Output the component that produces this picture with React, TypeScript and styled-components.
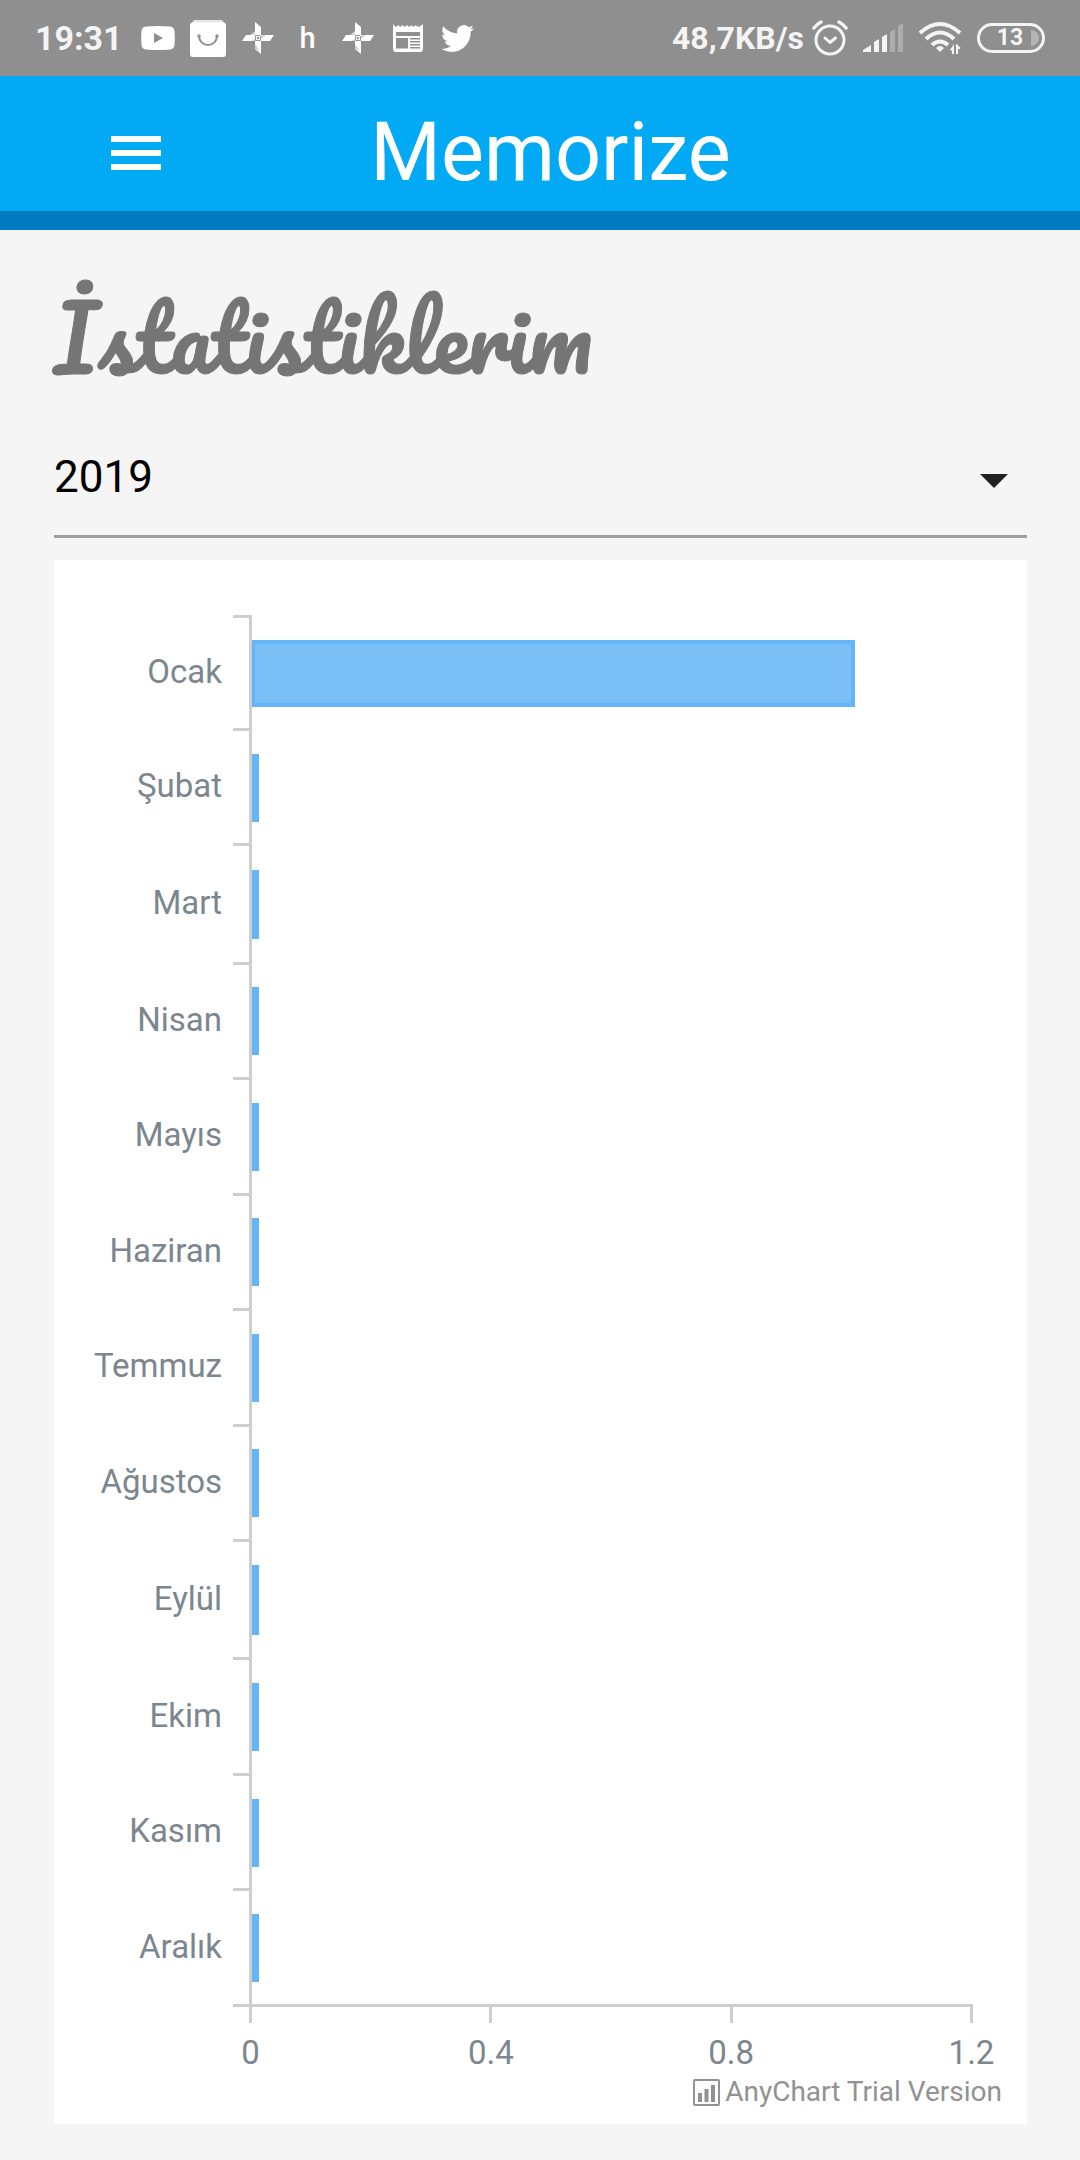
import React, { useState } from "react";
import styled, { createGlobalStyle } from "styled-components";

const GlobalStyle = createGlobalStyle`
  *, *::before, *::after { box-sizing: border-box; }
  body {
    margin: 0;
    background: #f5f5f5;
    font-family: Roboto, "Noto Sans", sans-serif;
  }
`;

const Page = styled.div`
  display: flex;
  flex-direction: column;
  min-height: 100vh;
`;

/* Status bar */

const StatusBar = styled.div`
  display: flex;
  justify-content: space-between;
  align-items: center;
  height: 76px;
  padding: 0 35px;
  background: #8f8f8f;
  color: #f4f4f4;
`;

const StatusGroup = styled.div<{ $gap: number }>`
  display: flex;
  align-items: center;
  gap: ${(p) => p.$gap}px;
`;

const StatusText = styled.span<{ $size: number; $weight: number }>`
  font-size: ${(p) => p.$size}px;
  font-weight: ${(p) => p.$weight};
  line-height: 40px;
  white-space: nowrap;
`;

const Notifications = styled.div`
  display: grid;
  grid-auto-flow: column;
  grid-auto-columns: 50px;
  place-items: center;
  color: #fff;
`;

/* App bar */

const AppBar = styled.header`
  display: grid;
  grid-template-columns: 1fr auto 1fr;
  align-items: center;
  height: 154px;
  padding: 0 90px 0 111px;
  background: #02a9f5;
  border-bottom: 19px solid #007ac1;
`;

const MenuButton = styled.button`
  justify-self: start;
  display: flex;
  padding: 0;
  border: 0;
  background: none;
  color: #fff;
  margin-top: 18px;
`;

const AppTitle = styled.div`
  color: #fff;
  font-size: 81px;
  line-height: 96px;
  padding-top: 18px;
`;

/* Content */

const Main = styled.main`
  flex: 1;
  display: flex;
  flex-direction: column;
  padding: 40px 53px 36px 54px;
`;

const Heading = styled.h1`
  margin: 0 0 6px;
  color: #757575;
  font-family: Pacifico, cursive;
  font-size: 87px;
  font-weight: 400;
  line-height: 134px;
  -webkit-text-stroke: 1px #757575;
`;

const SelectField = styled.div`
  display: flex;
  align-items: center;
  height: 128px;
  padding: 16px 19px 0 0;
  border-bottom: 3px solid #9e9e9e;
`;

const YearSelect = styled.select`
  flex: 1;
  appearance: none;
  margin: 0 0 8px;
  padding: 0;
  border: 0;
  outline: 0;
  background: none;
  color: #000;
  font-family: inherit;
  font-size: 44px;
  line-height: 52px;
`;

const Caret = styled.span`
  border: 14px solid transparent;
  border-top-color: #212121;
  border-bottom: 0;
`;

/* Chart */

const ChartCard = styled.section`
  flex: 1;
  display: flex;
  flex-direction: column;
  margin-top: 22px;
  padding: 55px 25px 14px 24px;
  background: #fff;
  color: #7c868e;
  font-size: 33px;
`;

const Plot = styled.div<{ $rows: string }>`
  flex: 1;
  display: grid;
  grid-template-rows: ${(p) => p.$rows};
  margin-right: 30px;
`;

const Row = styled.div`
  display: grid;
  grid-template-columns: 155px 16px 1fr;
  min-height: 48px;
`;

const MonthLabel = styled.div`
  display: flex;
  align-items: center;
  justify-content: flex-end;
  padding: 0 11px 0 0;
`;

const RowTick = styled.div`
  border-top: 3px solid #cecece;
`;

const Track = styled.div`
  display: flex;
  align-items: center;
  padding-top: 4px;
  border-left: 3px solid #cecece;
`;

const Bar = styled.div`
  height: 61%;
  border: 4px solid #64b5f6;
  border-left-width: 3px;
  background: #7bbff7;
`;

const ValueAxis = styled.div`
  display: flex;
  justify-content: space-between;
  margin: 0 29px 1px 155px;
  padding-left: 16px;
  border-top: 3px solid #cecece;
`;

const ValueTick = styled.div`
  display: flex;
  flex-direction: column;
  align-items: center;
  width: 3px;
  line-height: 40px;
  white-space: nowrap;

  &::before {
    content: "";
    width: 3px;
    height: 16px;
    margin-bottom: 10px;
    background: #cecece;
  }
`;

const Credit = styled.a`
  align-self: flex-end;
  display: flex;
  align-items: center;
  gap: 5px;
  color: #929292;
  font-size: 28px;
  line-height: 36px;
  text-decoration: none;
`;

const months = [
  { name: "Ocak", value: 1, span: 41 },
  { name: "Şubat", value: 0, span: 42 },
  { name: "Mart", value: 0, span: 43 },
  { name: "Nisan", value: 0, span: 42 },
  { name: "Mayıs", value: 0, span: 42 },
  { name: "Haziran", value: 0, span: 42 },
  { name: "Temmuz", value: 0, span: 42 },
  { name: "Ağustos", value: 0, span: 42 },
  { name: "Eylül", value: 0, span: 43 },
  { name: "Ekim", value: 0, span: 42 },
  { name: "Kasım", value: 0, span: 42 },
  { name: "Aralık", value: 0, span: 42 },
];

const axisMax = 1.2;
const axisValues = ["0", "0.4", "0.8", "1.2"];

const YoutubeIcon = () => (
  <svg width="34" height="24" viewBox="0 0 34 24">
    <path
      fill="#fff"
      fillRule="evenodd"
      d="M5 .6Q17-.4 29 .6q4 .4 4.400 4 .8 7.400 0 14.800-.4 3.600-4.400 4-12 1-24 0-4-.4-4.400-4-.8-7.400 0-14.800Q1 1 5 .6ZM13 7v10l9-5Z"
    />
  </svg>
);

const BagIcon = () => (
  <svg width="36" height="37" viewBox="0 0 36 37">
    <path fill="#e6e6e6" d="M5 0h26q2 0 3 3H2q1-3 3-3Z" />
    <rect y="2.500" width="36" height="34.500" rx="3" fill="#fff" />
    <path d="M9 16a9 9 0 0 0 18 0" fill="none" stroke="#8f8f8f" strokeWidth="2" />
    <circle cx="9" cy="16" r="1.700" fill="#8f8f8f" />
    <circle cx="27" cy="16" r="1.700" fill="#8f8f8f" />
  </svg>
);

const PinwheelIcon = () => (
  <svg width="32" height="32" viewBox="0 0 32 32">
    <path fill="#fff" d="M13 0l6 5v8H13ZM32 13l-4 6h-9v-6ZM19 32l-6-5v-8h6ZM0 19l4-6h9v6Z" />
    <path fill="#fff" d="M13 13h6v6h-6Z" />
    <path fill="#d4d4d4" d="M8 13l5-4v4ZM19 13h5l-5 4ZM13 19h-4l4-2ZM13 22l5 7-5-2Z" />
    <path d="M13 18.500h5M18.500 19v-5M13.500 13v5M14 13.500h4" fill="none" stroke="#9a9a9a" strokeWidth="1" />
    <circle cx="16" cy="16" r="1.200" fill="#8f8f8f" />
  </svg>
);

const NewsIcon = () => (
  <svg width="30" height="28" viewBox="0 0 30 28">
    <path
      fill="#fff"
      fillRule="evenodd"
      d="M0 0l2 2.500h2L5.200 1l1.200 1.500h2L9.600 1l1.200 1.500h2L14 1l1.200 1.500h2L18.400 1l1.200 1.500h2L22.800 1 24 2.500h3L30 0v25q0 3-3 3H3q-3 0-3-3ZM3 8v4h24V8ZM3 14v10.500h12V14ZM17 14v1.500h10V14ZM17 17v1.500h10V17ZM17 20v1.500h10V20ZM17 23v1.500h10V23Z"
    />
  </svg>
);

const TwitterIcon = () => (
  <svg width="33" height="33" viewBox="0 0 24 24">
    <path
      fill="#fff"
      d="M23.953 4.570a10 10 0 0 1-2.825.775 4.958 4.958 0 0 0 2.163-2.723c-.951.555-2.005.959-3.127 1.184a4.920 4.920 0 0 0-8.384 4.482C7.690 8.095 4.067 6.130 1.640 3.162a4.822 4.822 0 0 0-.666 2.475c0 1.710.87 3.213 2.188 4.096a4.904 4.904 0 0 1-2.228-.616v.06a4.923 4.923 0 0 0 3.946 4.827 4.996 4.996 0 0 1-2.212.085 4.936 4.936 0 0 0 4.604 3.417 9.867 9.867 0 0 1-6.102 2.105c-.39 0-.779-.023-1.170-.067a13.995 13.995 0 0 0 7.557 2.209c9.053 0 13.998-7.496 13.998-13.985 0-.21 0-.42-.015-.63A9.935 9.935 0 0 0 24 4.590z"
    />
  </svg>
);

const AlarmIcon = () => (
  <svg width="36" height="36" viewBox="0 0 36 36" fill="none" stroke="#f4f4f4" strokeLinecap="round">
    <circle cx="18" cy="20" r="14" strokeWidth="3" />
    <path d="M13 18l5 4.500 5.500-4.500" strokeWidth="3" strokeLinejoin="round" />
    <path d="M2 8q3-4 7-6M34 8q-3-4-7-6" strokeWidth="3.500" />
  </svg>
);

const SignalIcon = () => (
  <svg width="41" height="30" viewBox="0 0 41 30" fill="#f4f4f4">
    <path d="M0 29v-2l8-5v7ZM11 29V19l5-3v13ZM19 29V14l5-3v18Z" />
    <path d="M27 29V9l5-3v23ZM35 29V3l5-3v29Z" opacity=".3" />
  </svg>
);

const WifiIcon = () => (
  <svg width="43" height="34" viewBox="0 0 43 34">
    <g fill="none" stroke="#f4f4f4" strokeWidth="4">
      <path d="M1 12Q21-6 41 12" />
      <path d="M7 18Q21 5 35 18" />
      <path d="M13 24Q21 17 29 24" />
    </g>
    <path fill="#f4f4f4" d="M17 27q4-4 8 0l-4 4ZM35 23v10h-2v-4h-2ZM37 33V23h1l3.500 5H39v5Z" />
    <path fill="#f4f4f4" d="M31 28h4v5ZM42 27l-5-3v3Z" />
  </svg>
);

const Battery = styled.span`
  display: flex;
  align-items: center;
  justify-content: center;
  position: relative;
  width: 68px;
  height: 30px;
  padding-right: 2px;
  border: 3px solid #f4f4f4;
  border-radius: 15px;
  font-size: 23px;
  font-weight: 700;
  line-height: 24px;

  &::after {
    content: "";
    position: absolute;
    right: 3px;
    width: 8px;
    height: 16px;
    border-radius: 0 8px 8px 0;
    background: #b4b4b4;
  }
`;

const MenuIcon = () => (
  <svg width="50" height="34" viewBox="0 0 50 34" fill="currentColor">
    <path d="M0 0h50v6H0ZM0 14h50v6H0ZM0 28h50v6H0Z" />
  </svg>
);

const ChartIcon = () => (
  <svg width="27" height="27" viewBox="0 0 27 27">
    <rect x="1" y="1" width="25" height="25" rx="1" fill="none" stroke="#929292" strokeWidth="2" />
    <path fill="#929292" d="M5 14h4v9H5ZM11.500 10h4v13h-4ZM18 6h4v17h-4Z" />
  </svg>
);

export default function App() {
  const [year, setYear] = useState("2019");

  return (
    <Page>
      <GlobalStyle />
      <StatusBar>
        <StatusGroup $gap={10}>
          <StatusText $size={34} $weight={700}>19:31</StatusText>
          <Notifications>
            <YoutubeIcon />
            <BagIcon />
            <PinwheelIcon />
            <StatusText $size={29} $weight={500}>h</StatusText>
            <PinwheelIcon />
            <NewsIcon />
            <TwitterIcon />
          </Notifications>
        </StatusGroup>
        <StatusGroup $gap={15}>
          <StatusGroup $gap={8}>
            <StatusText $size={32} $weight={700}>48,7KB/s</StatusText>
            <AlarmIcon />
          </StatusGroup>
          <SignalIcon />
          <WifiIcon />
          <Battery>13</Battery>
        </StatusGroup>
      </StatusBar>

      <AppBar>
        <MenuButton type="button" aria-label="Menü">
          <MenuIcon />
        </MenuButton>
        <AppTitle>Memorize</AppTitle>
      </AppBar>

      <Main>
        <Heading lang="tr">İstatistiklerim</Heading>
        <SelectField>
          <YearSelect aria-label="Yıl" value={year} onChange={(e) => setYear(e.target.value)}>
            <option value="2019">2019</option>
          </YearSelect>
          <Caret />
        </SelectField>

        <ChartCard>
          <Plot $rows={months.map((m) => `${m.span}fr`).join(" ")}>
            {months.map((m) => (
              <Row key={m.name}>
                <MonthLabel>{m.name}</MonthLabel>
                <RowTick />
                <Track>
                  <Bar style={{ width: `calc(${(m.value / axisMax) * 100}% + 3px)` }} />
                </Track>
              </Row>
            ))}
          </Plot>
          <ValueAxis>
            {axisValues.map((v) => (
              <ValueTick key={v}>{v}</ValueTick>
            ))}
          </ValueAxis>
          <Credit href="#anychart">
            <ChartIcon />
            AnyChart Trial Version
          </Credit>
        </ChartCard>
      </Main>
    </Page>
  );
}
